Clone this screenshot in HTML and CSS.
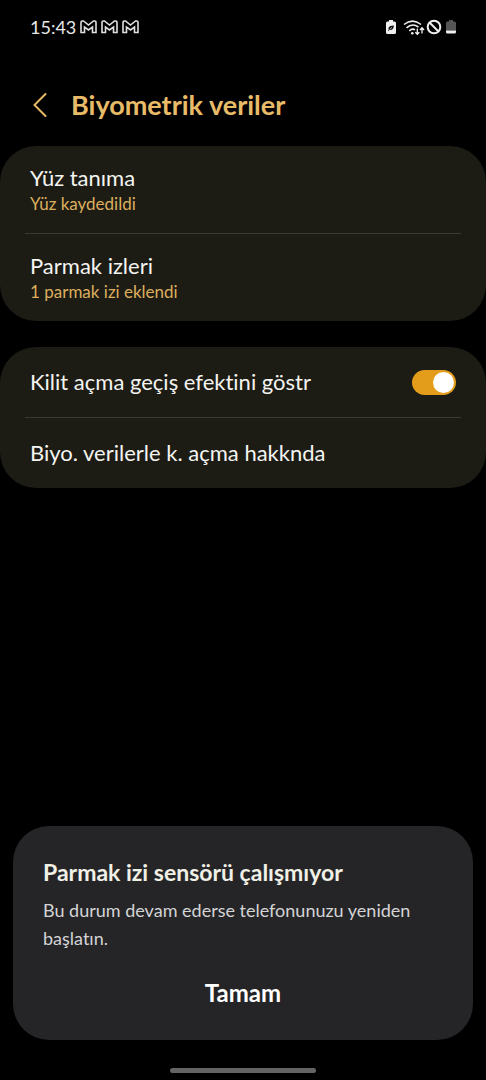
FILE: index.html
```html
<!DOCTYPE html>
<html lang="tr">
<head>
<meta charset="utf-8">
<meta name="viewport" content="width=device-width, initial-scale=1">
<title>Biyometrik veriler</title>
<link rel="stylesheet" href="styles.css">
</head>
<body>
<div class="screen">
  <div class="status">
    <div class="status-left">
      <time class="clock">15:43</time>
      <svg class="mail" viewBox="0 0 17 14" aria-hidden="true"><path d="M1 2.200Q1 1 2.300 1H3.500L8.500 5L13.500 1H14.700Q16 1 16 2.200V12.500H12.500V7L8.500 10L4.500 7V12.500H1Z"/></svg>
      <svg class="mail" viewBox="0 0 17 14" aria-hidden="true"><path d="M1 2.200Q1 1 2.300 1H3.500L8.500 5L13.500 1H14.700Q16 1 16 2.200V12.500H12.500V7L8.500 10L4.500 7V12.500H1Z"/></svg>
      <svg class="mail" viewBox="0 0 17 14" aria-hidden="true"><path d="M1 2.200Q1 1 2.300 1H3.500L8.500 5L13.500 1H14.700Q16 1 16 2.200V12.500H12.500V7L8.500 10L4.500 7V12.500H1Z"/></svg>
    </div>
    <svg class="indicators" viewBox="0 0 72 18" aria-hidden="true">
      <path class="fill" d="M4 2H8V3.500H9.500Q11 3.500 11 5V14.500Q11 16 9.500 16H2.500Q1 16 1 14.500V5Q1 3.500 2.500 3.500H4Z"/>
      <path class="leaf" d="M8.800 7.500C5.500 7.500 3.500 8.600 3.500 10.300L3.700 11.300L3 12.400L3.600 12.900L4.400 11.900C7.400 12.300 8.900 10.500 8.800 7.500Z"/>
      <path class="vein" d="M4.500 11.500L7 9.300"/>
      <g class="wave">
        <path d="M19 6.500Q27.500-.3 36 6.500"/>
        <path d="M21.500 9.800Q27.500 4.600 33.500 9.200"/>
        <path d="M24.300 12.800Q27.500 10 30 11.800"/>
      </g>
      <circle class="fill" cx="27.300" cy="15.200" r="1.300"/>
      <path class="arrow" d="M32.300 10.500V16M30.300 14.200L32.300 16.300L34.300 14.200M37 15.500V10M35 12L37 9.700L39 12"/>
      <circle class="line" cx="49" cy="9" r="6.300"/>
      <path class="line" d="M44.500 4.500L53.500 13.500"/>
      <path class="dim" d="M64 2H68V3.500H69.500Q71 3.500 71 5V12.500H61V5Q61 3.500 62.500 3.500H64Z"/>
      <path class="fill" d="M61 12.500H71V14Q71 15.500 69.500 15.500H62.500Q61 15.500 61 14Z"/>
    </svg>
  </div>

  <header class="header">
    <button class="back" type="button" aria-label="Geri">
      <svg viewBox="0 0 14 24" aria-hidden="true"><path d="M12.500 1L1.500 12L12.500 23"/></svg>
    </button>
    <h1 class="title">Biyometrik veriler</h1>
  </header>

  <main class="groups">
    <section class="card">
      <a class="row" href="#face"><span class="label">Yüz tanıma</span><span class="sub">Yüz kaydedildi</span></a>
      <a class="row" href="#fingerprints"><span class="label">Parmak izleri</span><span class="sub">1 parmak izi eklendi</span></a>
    </section>
    <section class="card">
      <label class="row row-single" for="effect"><span class="label">Kilit açma geçiş efektini göstr</span><input class="switch" id="effect" type="checkbox" role="switch" checked></label>
      <a class="row row-single" href="#about"><span class="label">Biyo. verilerle k. açma hakknda</span></a>
    </section>
  </main>

  <section class="dialog" role="alertdialog" aria-labelledby="dialog-title" aria-describedby="dialog-text">
    <h2 class="dialog-title" id="dialog-title">Parmak izi sensörü çalışmıyor</h2>
    <p class="dialog-text" id="dialog-text">Bu durum devam ederse telefonunuzu yeniden başlatın.</p>
    <button class="confirm" type="button">Tamam</button>
  </section>
  <div class="home"></div>
</div>
</body>
</html>
```
FILE: styles.css
```css
* { box-sizing: border-box; }
body {
  margin: 0;
  background: #000;
  color: #f4f4f0;
  font-family: Lato, "Noto Sans", sans-serif;
  font-variant-ligatures: none;
}
.screen {
  display: flex;
  flex-direction: column;
  min-height: 100vh;
}
.status {
  display: flex;
  align-items: center;
  justify-content: space-between;
  padding: 14px 29px 0 30px;
  height: 40px;
}
.status-left {
  display: flex;
  align-items: center;
  gap: 4px;
}
.clock {
  font-size: 18px;
  line-height: 26px;
  color: #e8e8e8;
}
.mail {
  width: 17px;
  height: 14px;
  fill: none;
  stroke: #e0e0e0;
  stroke-width: 1.6;
}
.indicators { width: 72px; height: 18px; }
.fill { fill: #f0f0f0; }
.leaf { fill: #111; }
.vein { stroke: #f0f0f0; stroke-width: 0.7; }
.dim { fill: #555; }
.line { fill: none; stroke: #f0f0f0; stroke-width: 2; }
.wave { fill: none; stroke: #f0f0f0; stroke-width: 1.6; }
.arrow { fill: none; stroke: #f0f0f0; stroke-width: 1.3; }

.header {
  display: flex;
  align-items: center;
  gap: 15px;
  padding: 45px 24px 21px;
}
.back {
  display: flex;
  justify-content: center;
  width: 32px;
  padding: 0;
  border: 0;
  background: none;
}
.back svg {
  width: 14px;
  height: 24px;
  fill: none;
  stroke: #e6b866;
  stroke-width: 2;
  stroke-linecap: round;
}
.title {
  margin: 0;
  font-size: 27px;
  line-height: 40px;
  font-weight: 700;
  color: #e8bb68;
}

.groups {
  display: flex;
  flex-direction: column;
  gap: 26px;
}
.card {
  padding: 0 25px;
  border-radius: 36px;
  background: #1c1c15;
}
.row {
  display: flex;
  flex-direction: column;
  padding: 18px 5px;
  color: inherit;
  text-decoration: none;
}
.row + .row { border-top: 1px solid #3b3b36; }
.row-single {
  flex-direction: row;
  align-items: center;
  justify-content: space-between;
  padding: 21px 5px;
}
.label {
  font-size: 22px;
  line-height: 28px;
}
.sub {
  font-size: 17px;
  line-height: 23px;
  color: #dcae5d;
}
.switch {
  appearance: none;
  display: flex;
  align-items: center;
  justify-content: flex-end;
  width: 44px;
  height: 25px;
  margin: 0;
  padding: 2px;
  border-radius: 13px;
  background: #e39d1b;
}
.switch::before {
  content: "";
  width: 21px;
  height: 21px;
  border-radius: 50%;
  background: #fff;
}
.switch:not(:checked) { justify-content: flex-start; background: #555; }

.dialog {
  display: flex;
  flex-direction: column;
  margin: auto 13px 0;
  padding: 30px 30px 27px;
  border-radius: 36px;
  background: #252527;
}
.dialog-title {
  margin: 0;
  font-size: 23px;
  line-height: 32px;
  font-weight: 700;
  color: #f0f0e6;
}
.dialog-text {
  margin: 8px 0 21px;
  font-size: 18px;
  line-height: 28px;
  color: #d4d4d6;
}
.confirm {
  padding: 0;
  border: 0;
  background: none;
  font: 700 24px/40px Lato, "Noto Sans", sans-serif;
  color: #fff;
}
.home {
  align-self: center;
  width: 30%;
  height: 5px;
  margin: 28px 0 7px;
  border-radius: 3px;
  background: #646464;
}
```
